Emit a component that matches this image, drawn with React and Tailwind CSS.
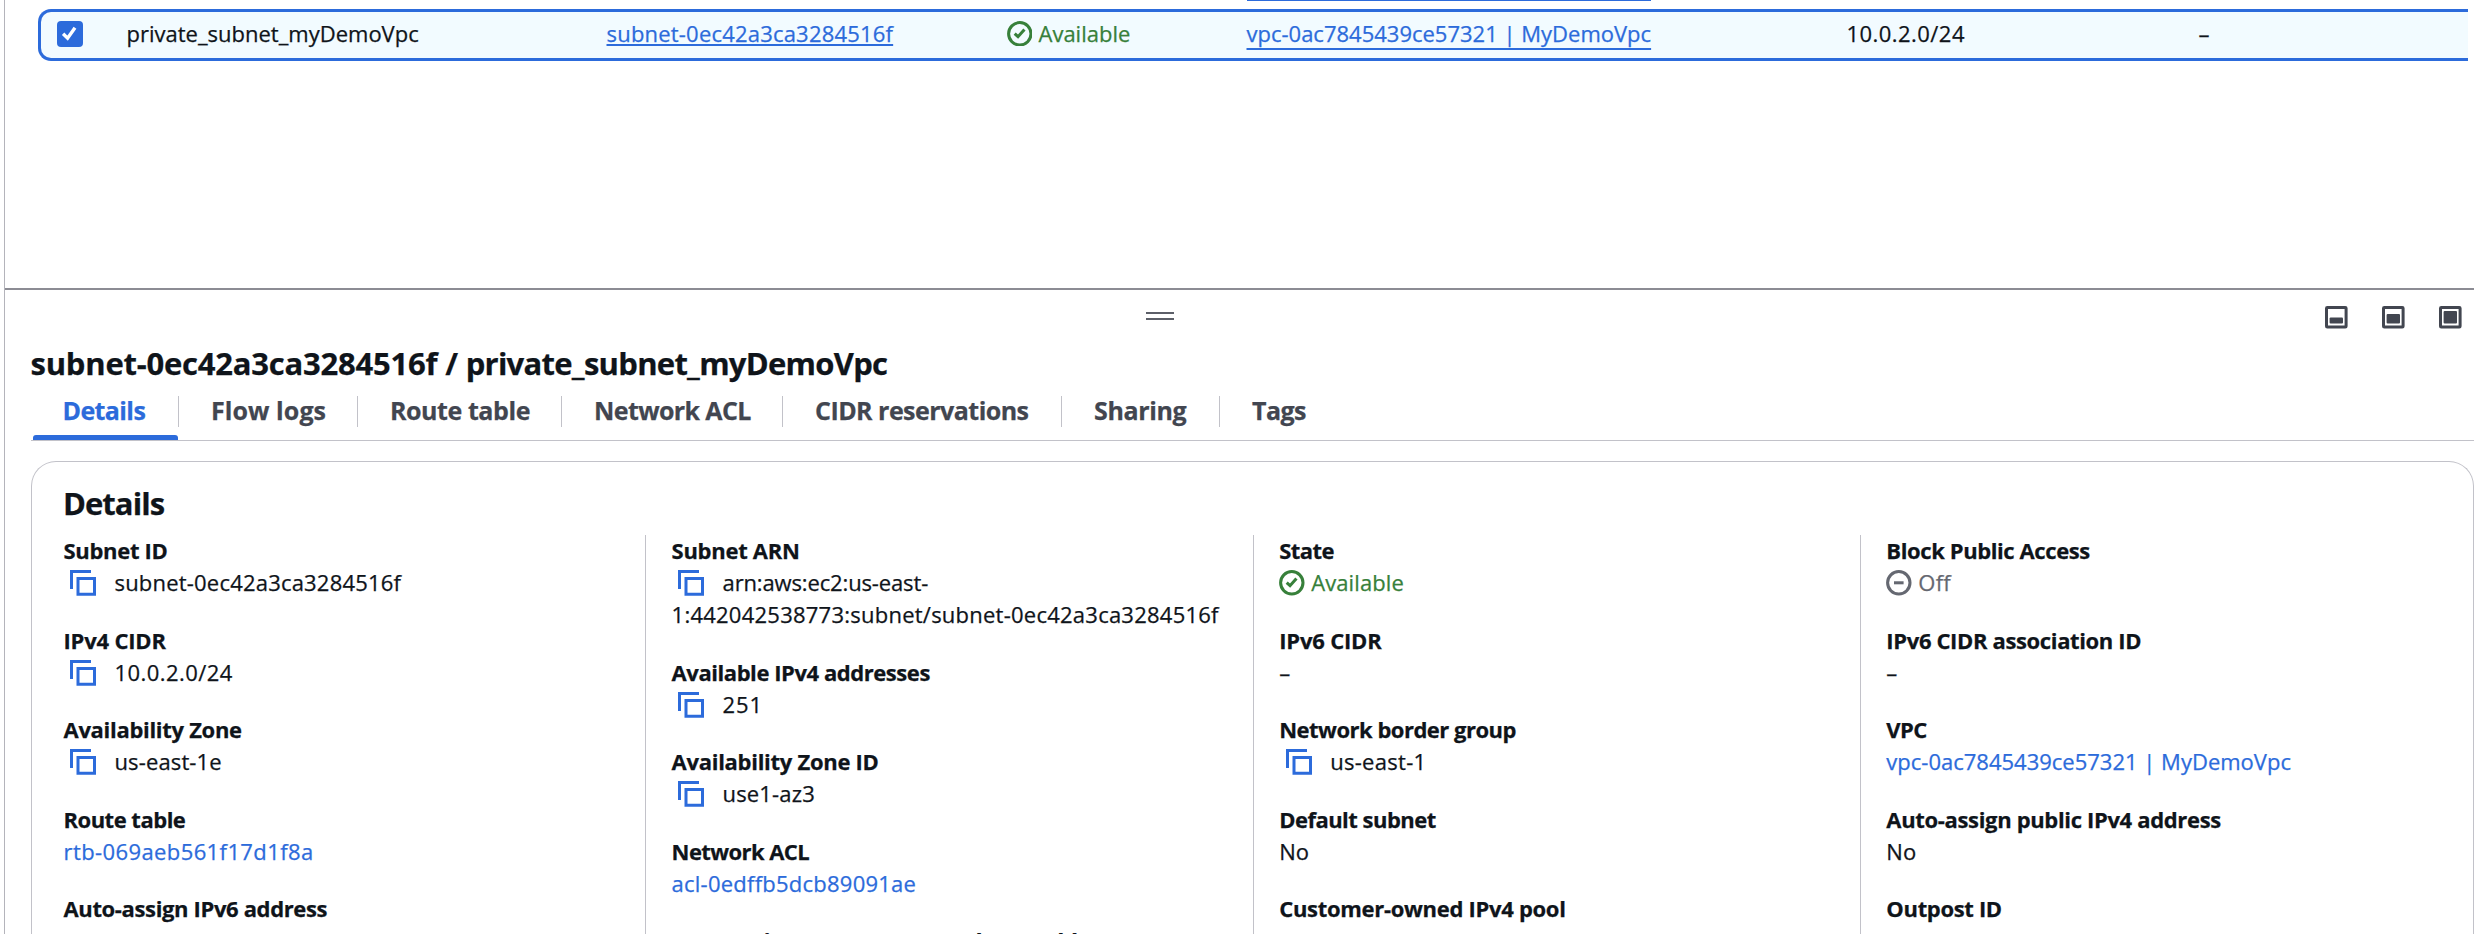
const BLUE = "text-[#2c6bdb]";

function CopyIcon() {
  return (
    <svg className="mt-[2px] size-[26px] shrink-0" viewBox="0 0 26 26" fill="none" stroke="#2c6bdb" strokeWidth="3">
      <path d="M1.5 19V1.5H21" />
      <path d="M8 8.5H24.5V24.3H8Z" />
    </svg>
  );
}

function CheckCircle() {
  return (
    <svg className="mt-[2px] size-[25.6px] shrink-0" viewBox="0 0 16 16" fill="none" stroke="#37803a" strokeWidth="1.9">
      <circle cx="8" cy="8" r="7" />
      <path d="M4.8 7.9 6.9 9.8 10.9 5.3" />
    </svg>
  );
}

function MinusCircle() {
  return (
    <svg className="mt-[2px] size-[25.6px] shrink-0" viewBox="0 0 16 16" fill="none" stroke="#656871" strokeWidth="1.9">
      <circle cx="8" cy="8" r="7" />
      <path d="M5 8H11" />
    </svg>
  );
}

function PanelSizeIcon({ top }) {
  return (
    <svg className="size-[23px]" viewBox="0 0 23 23" fill="none">
      <rect x="1.5" y="1.5" width="19.6" height="19.6" rx="0.8" stroke="#424650" strokeWidth="3" />
      <rect x="4.6" y={top} width="13.4" height={17.6 - top} rx="1" fill="#424650" />
    </svg>
  );
}

const tabs = [
  { label: "Details", active: true, width: "w-[148px]", track: "tracking-[-0.6px]" },
  { label: "Flow logs", width: "w-[179px]", track: "tracking-[0.08px]" },
  { label: "Route table", width: "w-[204px]", track: "tracking-[-0.43px]" },
  { label: "Network ACL", width: "w-[221px]", track: "tracking-[-0.6px]" },
  { label: "CIDR reservations", width: "w-[279px]", track: "tracking-[-0.53px]" },
  { label: "Sharing", width: "w-[158px]", track: "tracking-[-0.37px]" },
  { label: "Tags", width: "w-[120px]", track: "tracking-[-0.57px]" },
];

const columns = [
  [
    { label: "Subnet ID", lt: "tracking-[-0.3px]", value: "subnet-0ec42a3ca3284516f", vt: "tracking-[0.2px]", kind: "copy" },
    { label: "IPv4 CIDR", lt: "tracking-[-0.2px]", value: "10.0.2.0/24", vt: "tracking-[0.45px]", kind: "copy" },
    { label: "Availability Zone", lt: "tracking-[-0.3px]", value: "us-east-1e", vt: "tracking-[0.13px]", kind: "copy" },
    { label: "Route table", lt: "tracking-[-0.5px]", value: "rtb-069aeb561f17d1f8a", vt: "tracking-[0.4px]", kind: "link" },
    { label: "Auto-assign IPv6 address", lt: "tracking-[-0.36px]" },
  ],
  [
    { label: "Subnet ARN", lt: "tracking-[-0.28px]", value: "arn:aws:ec2:us-east-", vt: "tracking-[-0.14px]", rest: "1:442042538773:subnet/subnet-0ec42a3ca3284516f", kind: "copy" },
    { label: "Available IPv4 addresses", lt: "tracking-[-0.44px]", value: "251", vt: "tracking-[0.9px]", kind: "copy" },
    { label: "Availability Zone ID", lt: "tracking-[-0.28px]", value: "use1-az3", vt: "tracking-[0.15px]", kind: "copy" },
    { label: "Network ACL", lt: "tracking-[-0.58px]", value: "acl-0edffb5dcb89091ae", vt: "tracking-[0.24px]", kind: "link" },
    { label: "Auto-assign customer-owned IPv4 address", lt: "tracking-[-0.36px]" },
  ],
  [
    { label: "State", lt: "tracking-[-0.57px]", value: "Available", vt: "tracking-[0.1px]", kind: "ok" },
    { label: "IPv6 CIDR", lt: "tracking-[-0.19px]", value: "–", vt: "tracking-normal" },
    { label: "Network border group", lt: "tracking-[-0.5px]", value: "us-east-1", vt: "tracking-[0.3px]", kind: "copy" },
    { label: "Default subnet", lt: "tracking-[-0.52px]", value: "No", vt: "tracking-normal" },
    { label: "Customer-owned IPv4 pool", lt: "tracking-[-0.3px]" },
  ],
  [
    { label: "Block Public Access", lt: "tracking-[-0.4px]", value: "Off", vt: "tracking-[0.19px]", kind: "off" },
    { label: "IPv6 CIDR association ID", lt: "tracking-[-0.36px]", value: "–", vt: "tracking-normal" },
    { label: "VPC", lt: "tracking-[-0.6px]", value: "vpc-0ac7845439ce57321 | MyDemoVpc", vt: "tracking-normal", kind: "link" },
    { label: "Auto-assign public IPv4 address", lt: "tracking-[-0.34px]", value: "No", vt: "tracking-normal" },
    { label: "Outpost ID", lt: "tracking-[-0.34px]" },
  ],
];

function Value({ item }) {
  const text = <span className={item.vt}>{item.value}</span>;
  if (item.kind === "copy") {
    return (
      <div>
        <div className="flex h-8 items-center gap-[18.6px] pl-[6.4px]">
          <CopyIcon />
          {text}
        </div>
        {item.rest && <div className="h-8 tracking-[0.24px]">{item.rest}</div>}
      </div>
    );
  }
  if (item.kind === "ok") {
    return (
      <div className="flex h-8 items-center gap-[6.4px] text-[#37803a]">
        <CheckCircle />
        {text}
      </div>
    );
  }
  if (item.kind === "off") {
    return (
      <div className="flex h-8 items-center gap-[6.4px] text-[#656871]">
        <MinusCircle />
        {text}
      </div>
    );
  }
  return <div className={item.kind === "link" ? "h-8 " + BLUE : "h-8"}>{text}</div>;
}

export default function App() {
  return (
    <div className="h-[934px] w-full overflow-hidden bg-white pl-1 font-['Open_Sans','Noto_Sans',sans-serif] text-[22px] leading-8 whitespace-nowrap text-[#0f141a] [-webkit-text-stroke:0.25px]">
      <div className="flex h-full flex-col border-l border-[#b4b4bb]">
        <section className="h-[288px] shrink-0">
          <div className="flex h-[9px] pl-[1242px]">
            <div className="h-px w-[404px] bg-[#2c6bdb]" />
          </div>
          <div className="mr-[6px] ml-[32.5px] flex h-[52px] items-center rounded-l-[13px] border-y-3 border-l-3 border-[#2c6bdb] bg-[#f2fbff] pb-[5px]">
            <div className="w-[86px] shrink-0 pt-[2px] pl-[16.5px]">
              <div className="flex size-[26px] items-center justify-center rounded-[4px] bg-[#2c6bdb]">
                <svg className="size-[26px]" viewBox="0 0 26 26" fill="none" stroke="#fff" strokeWidth="3.4">
                  <path d="M6.1 12.8 10.6 17.2 18 6.8" />
                </svg>
              </div>
            </div>
            <div className="w-[480px] shrink-0">private_subnet_myDemoVpc</div>
            <div className="w-[400px] shrink-0">
              <span className="tracking-[0.2px] text-[#2c6bdb] underline decoration-2 underline-offset-[2px]">subnet-0ec42a3ca3284516f</span>
            </div>
            <div className="flex w-[240px] shrink-0 items-center gap-[6.4px] text-[#37803a]">
              <CheckCircle />
              Available
            </div>
            <div className="w-[600px] shrink-0">
              <span className="text-[#2c6bdb] underline decoration-2 underline-offset-[6px]">vpc-0ac7845439ce57321 | MyDemoVpc</span>
            </div>
            <div className="w-[352px] shrink-0 tracking-[0.45px]">10.0.2.0/24</div>
            <div>–</div>
          </div>
        </section>

        <section className="flex flex-1 flex-col border-t-2 border-[#8c8c94]">
          <div className="flex h-[51px] items-start pt-4">
            <div className="flex flex-1 justify-between pt-1.5 pl-[1141px]">
              <div className="flex h-[7.5px] w-7 flex-col justify-between">
                <div className="h-[2px] bg-[#5c5f68]" />
                <div className="h-[2px] bg-[#5c5f68]" />
              </div>
            </div>
            <div className="flex gap-[34px] pr-3">
              <PanelSizeIcon top={11.4} />
              <PanelSizeIcon top={8} />
              <PanelSizeIcon top={5} />
            </div>
          </div>

          <h1 className="-mt-px mb-[2px] pl-[25.5px] text-[31px] leading-[46px] font-bold">
            <span className="tracking-[-0.22px]">subnet-0ec42a3ca3284516f / </span>
            <span className="tracking-[-0.72px]">private_subnet_myDemoVpc</span>
          </h1>

          <nav className="ml-[26px] flex h-[53px] shrink-0 border-b border-[#c2c2c9] text-[25px] font-bold text-[#424650]">
            {tabs.map((t, i) => (
              <div key={t.label} className={"flex shrink-0 flex-col justify-between " + t.width}>
                <div className={"mt-[8px] flex h-[31px] items-center pb-[3px] " + (i < tabs.length - 1 ? "border-r border-[#c2c2c9] " : "") + (t.active ? "pl-[31.5px] text-[#2c6bdb]" : "pl-[32px]")}>
                  <span className={t.track}>{t.label}</span>
                </div>
                {t.active && <div className="ml-[2px] h-[5px] w-[145px] rounded-t-[3px] bg-[#2c6bdb]" />}
              </div>
            ))}
          </nav>

          <div className="mt-5 ml-[26px] flex-1 rounded-t-[25px] border-x border-t border-[#c2c2c9]">
            <h2 className="mt-[18px] pl-[31px] text-[31px] leading-[46px] font-bold tracking-[-0.95px]">Details</h2>
            <div className="mt-[9px] grid grid-cols-[613.4px_607.6px_607.2px_1fr]">
              {columns.map((col, c) => (
                <div key={c} className={"h-[420px] " + (c === 0 ? "pl-[31.5px]" : "border-l border-[#c2c2c9] pl-[25.2px]")}>
                  <div className="-mt-px flex flex-col gap-[25.6px]">
                    {col.map((item) => (
                      <div key={item.label}>
                        <div className={"h-8 font-bold " + item.lt}>{item.label}</div>
                        {item.value && <Value item={item} />}
                      </div>
                    ))}
                  </div>
                </div>
              ))}
            </div>
          </div>
        </section>
      </div>
    </div>
  );
}
